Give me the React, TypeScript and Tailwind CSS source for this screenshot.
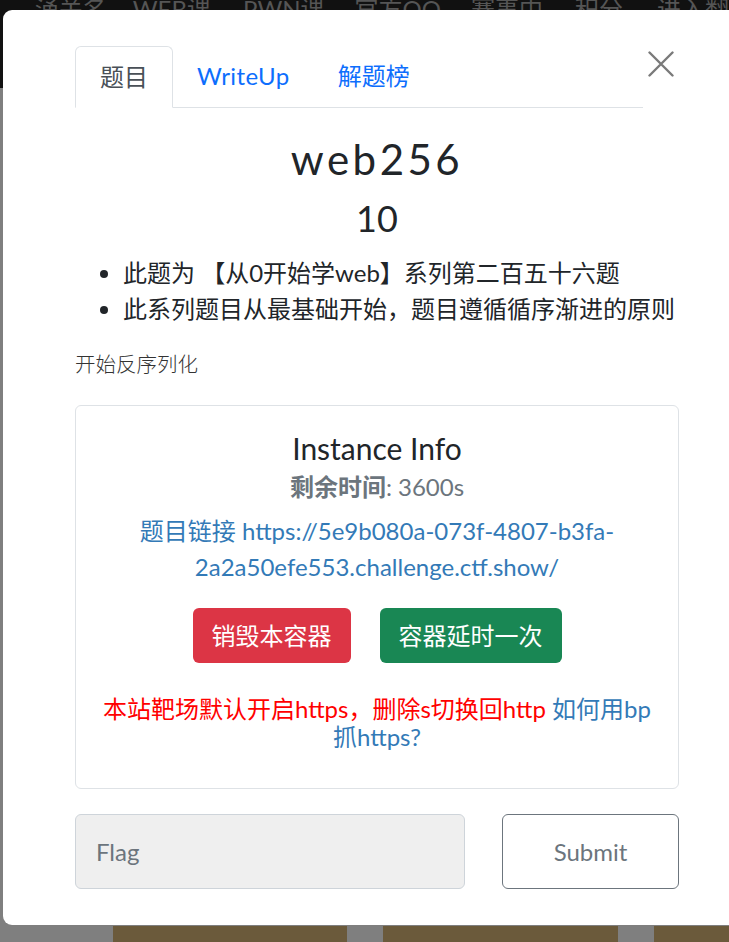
import React from 'react';

const CloseIcon: React.FC = () => (
  <svg width="26" height="26" viewBox="0 0 26 26" fill="none">
    <path d="M1.5 1.5 L24.5 24.5 M24.5 1.5 L1.5 24.5" stroke="#7a7a7a" strokeWidth="2.4" strokeLinecap="round" />
  </svg>
);

export default function App() {
  return (
    <div
      className="relative w-[729px] h-[942px] overflow-hidden bg-[#7f7f7f]"
      style={{ fontFamily: 'Lato, "Noto Sans CJK SC", sans-serif' }}
    >
      {/* page behind the backdrop */}
      <div className="h-[88px] bg-[#111111] overflow-hidden">
        <div className="flex items-start gap-[26px] -mt-[3px] text-[24px] leading-[24px] text-[#555555] whitespace-nowrap -ml-[8px]">
          <span className="w-[14px] overflow-hidden">P</span>
          <span className="ml-[10px]">涌关名</span>
          <span>WEB课</span>
          <span className="ml-[6px]">PWN课</span>
          <span className="ml-[4px]">官方QQ</span>
          <span className="ml-[4px]">赛事中</span>
          <span className="ml-[6px]">积分</span>
          <span className="ml-[8px]">进入翻</span>
        </div>
      </div>
      <div className="flex gap-[36px] pl-[113px] pt-[838px]">
        <div className="shrink-0 w-[234px] h-[200px] bg-[#6b5a3b]" />
        <div className="shrink-0 w-[235px] h-[200px] bg-[#6b5a3b]" />
        <div className="shrink-0 w-[235px] h-[200px] bg-[#6b5a3b]" />
      </div>

      {/* modal */}
      <div className="absolute left-[3px] top-[10px] w-[748px] h-[915px] bg-white rounded-[9px] px-[72px] pt-[36px]">
        <div className="flex items-start">
          <ul className="flex-1 flex border-b border-[#dee2e6] text-[24px] leading-[36px]">
            <li className="-mb-px px-[24px] py-[12px] border border-[#dee2e6] border-b-white rounded-t-[6px] text-[#495057]">
              题目
            </li>
            <li className="px-[24px] py-[12px] text-[#0d6efd] tracking-[0.4px]">WriteUp</li>
            <li className="px-[24px] py-[12px] text-[#0d6efd]">解题榜</li>
          </ul>
          <button className="w-[36px] h-[36px] flex items-center justify-center">
            <CloseIcon />
          </button>
        </div>

        <div className="text-[#212529]">
          <h3 className="mt-[26px] text-center text-[42px] leading-[50px] tracking-[3.5px]">web256</h3>
          <h4 className="mt-[13px] text-center text-[36px] leading-[43px]">10</h4>
          <ul className="mt-[15px] pl-[48px] list-disc text-[24px] leading-[36px]">
            <li>此题为 【从0开始学web】系列第二百五十六题</li>
            <li>此系列题目从最基础开始，题目遵循循序渐进的原则</li>
          </ul>
          <p className="mt-[23px] text-[20.5px] leading-[28px] font-light text-[#333333]">开始反序列化</p>
        </div>

        <div className="mt-[27px] h-[384px] border border-[#dee2e6] rounded-[6px] px-[20px] pt-[24px] text-center">
          <div className="text-[30px] leading-[36px] text-[#212529]">Instance Info</div>
          <div className="mt-[6px] text-[24px] leading-[30px] text-[#6c757d]">
            <span className="font-bold">剩余时间</span>: 3600s
          </div>
          <div className="mt-[11px] text-[24px] leading-[36px] text-[#337ab7]">
            题目链接 https://5e9b080a-073f-4807-b3fa-
            <br />
            2a2a50efe553.challenge.ctf.show/
          </div>
          <div className="mt-[23px] flex justify-center gap-[29px]">
            <button className="px-[19px] py-[9.5px] rounded-[6px] bg-[#dc3545] text-white text-[24px] leading-[36px]">
              销毁本容器
            </button>
            <button className="px-[19px] py-[9.5px] rounded-[6px] bg-[#198754] text-white text-[24px] leading-[36px]">
              容器延时一次
            </button>
          </div>
          <div className="mt-[32px] text-[24px] leading-[28px]">
            <span className="text-[#ff0000]">本站靶场默认开启https，删除s切换回http</span>{' '}
            <span className="text-[#337ab7]">
              如何用bp
              <br />
              抓https?
            </span>
          </div>
        </div>

        <div className="mt-[25px] flex gap-[37px]">
          <div className="w-[390px] h-[75px] bg-[#efefef] border border-[#ced4da] rounded-[6px] pl-[20px] flex items-center text-[24px] text-[#6c757d]">
            Flag
          </div>
          <button className="flex-1 h-[75px] border border-[#6c757d] rounded-[6px] text-[24px] text-[#6c757d]">
            Submit
          </button>
        </div>
      </div>
    </div>
  );
}
